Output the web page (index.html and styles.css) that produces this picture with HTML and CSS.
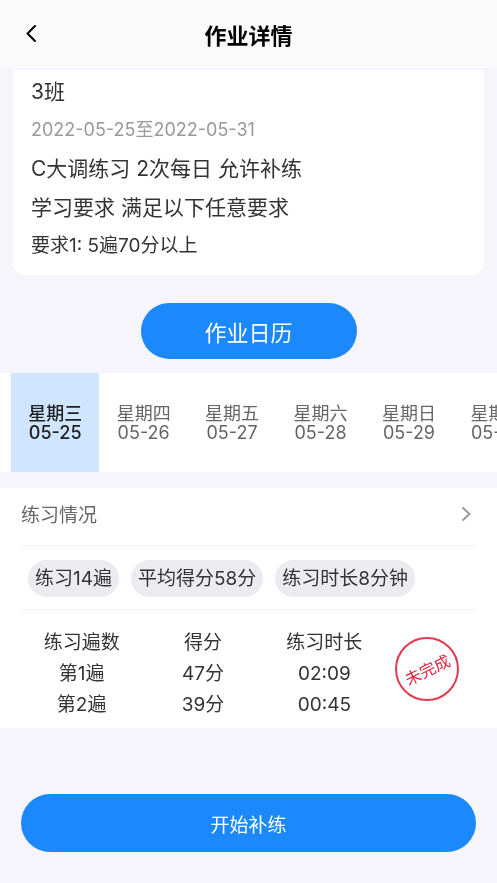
FILE: index.html
```html
<!DOCTYPE html>
<html lang="zh-CN">
<head>
<meta charset="utf-8">
<meta name="viewport" content="width=device-width, initial-scale=1">
<title>作业详情</title>
<link rel="stylesheet" href="styles.css">
</head>
<body>
<header class="topbar">
  <button class="icon-button" type="button" aria-label="返回">
    <svg width="12" height="20" viewBox="0 0 12 20" fill="none" stroke="currentColor" stroke-width="2" stroke-linecap="round" stroke-linejoin="round"><path d="M9 2 1.500 9.500 9 17"/></svg>
  </button>
  <h1 class="topbar-title">作业详情</h1>
</header>
<main>
  <section class="info-card">
    <p class="info-main">3班</p>
    <p class="info-date">2022-05-25至2022-05-31</p>
    <p class="info-main info-task">C大调练习 2次每日 允许补练</p>
    <p class="info-main">学习要求 满足以下任意要求</p>
    <p class="info-rule">要求1: 5遍70分以上</p>
  </section>

  <button class="primary calendar-button" type="button">作业日历</button>

  <nav class="days" aria-label="日期">
    <button class="day day-active" type="button">星期三<br>05-25</button>
    <button class="day" type="button">星期四<br>05-26</button>
    <button class="day" type="button">星期五<br>05-27</button>
    <button class="day" type="button">星期六<br>05-28</button>
    <button class="day" type="button">星期日<br>05-29</button>
    <button class="day" type="button">星期一<br>05-30</button>
  </nav>

  <section class="practice">
    <a class="practice-head" href="#">
      <span>练习情况</span>
      <svg width="10" height="16" viewBox="0 0 10 16" fill="none" stroke="currentColor" stroke-width="2"><path d="m1.500 1.500 7 6.500-7 6.500"/></svg>
    </a>
    <div class="chips">
      <span class="chip">练习14遍</span>
      <span class="chip">平均得分58分</span>
      <span class="chip">练习时长8分钟</span>
    </div>
    <div class="results">
      <table class="score-table">
        <thead><tr><th>练习遍数</th><th>得分</th><th>练习时长</th></tr></thead>
        <tbody>
          <tr><td>第1遍</td><td>47分</td><td>02:09</td></tr>
          <tr><td>第2遍</td><td>39分</td><td>00:45</td></tr>
        </tbody>
      </table>
      <div class="stamp"><span class="stamp-text">未完成</span></div>
    </div>
  </section>

  <div class="footer">
    <button class="primary start-button" type="button">开始补练</button>
  </div>
</main>
</body>
</html>
```
FILE: styles.css
```css
* { box-sizing: border-box; }

body {
  margin: 0;
  background: #f5f5fb;
  color: #333;
  font-family: Inter, "Noto Sans CJK SC", sans-serif;
  font-size: 19px;
  overflow-x: hidden;
}

button {
  border: 0;
  padding: 0;
  background: none;
  font: inherit;
  color: inherit;
  cursor: pointer;
}

svg { display: block; }

.topbar {
  display: grid;
  grid-template-columns: 32px 1fr 32px;
  align-items: center;
  height: 68px;
  padding: 0 16px;
  background: #fafafa;
  color: #000;
}

.icon-button {
  display: flex;
  align-items: center;
  justify-content: center;
  height: 32px;
}

.topbar-title {
  margin: 0;
  text-align: center;
  font-size: 22px;
  font-weight: 600;
}

.info-card {
  margin: 2px 13px 28px;
  padding: 3px 18px 10px;
  background: #fff;
  border-radius: 0 0 12px 12px;
  line-height: 38px;
}

.info-card p { margin: 0; }
.info-main { font-size: 21px; }
.info-card .info-task { line-height: 40px; }
.info-date { color: #999; font-size: 18px; }

.primary {
  display: block;
  background: #1b89fb;
  color: #fff;
  border-radius: 29px;
}

.calendar-button {
  width: 216px;
  height: 56px;
  margin: 0 auto 14px;
  font-size: 22px;
}

.days {
  display: grid;
  grid-auto-flow: column;
  grid-auto-columns: 18.2%;
  height: 99px;
  padding-left: 11px;
  margin-bottom: 16px;
  background: #fff;
  overflow-x: auto;
  scrollbar-width: none;
}

.day {
  color: #666;
  font-size: 18px;
  line-height: 19px;
}

.day-active {
  background: #d0e6ff;
  color: #222;
  font-weight: 500;
}

.practice {
  padding: 0 21px;
  background: #fff;
}

.practice-head {
  display: flex;
  align-items: center;
  justify-content: space-between;
  height: 58px;
  padding: 0 5px 6px 0;
  border-bottom: 1px solid #f3f3f6;
  color: #666;
  text-decoration: none;
}

.practice-head svg { color: #999; }

.chips {
  display: flex;
  gap: 12px;
  padding: 14px 7px 12px;
  border-bottom: 1px solid #f3f3f6;
}

.chip {
  padding: 0 7px;
  line-height: 37px;
  border-radius: 19px;
  background: #ebebf0;
  white-space: nowrap;
}

.results {
  display: grid;
  grid-template-columns: 4fr 1fr;
  align-items: start;
  padding: 17px 0 8px;
}

.score-table {
  width: 100%;
  table-layout: fixed;
  border-collapse: collapse;
  text-align: center;
  line-height: 31px;
}

.score-table th,
.score-table td {
  padding: 0;
  font-weight: 400;
}

.stamp {
  display: flex;
  align-items: center;
  justify-content: center;
  width: 64px;
  height: 64px;
  margin: 10px 0 0 10px;
  border: 2px solid #e23a4e;
  border-radius: 50%;
  color: #e0263c;
  font-size: 16px;
}

.stamp-text { transform: rotate(-26deg); }

.footer { padding: 66px 21px 31px; }

.start-button {
  width: 100%;
  height: 58px;
}
```
